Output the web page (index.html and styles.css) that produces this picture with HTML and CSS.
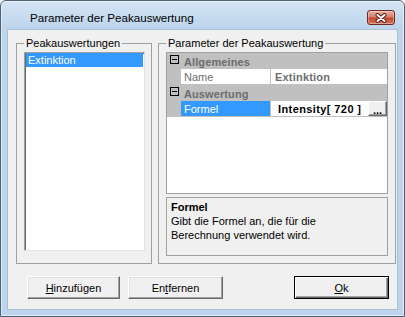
FILE: index.html
```html
<!doctype html>
<html lang="de">
<head>
  <meta charset="UTF-8" />
  <title>Parameter der Peakauswertung</title>
  <link rel="stylesheet" href="styles.css">
</head>
<body>
  <div class="window">
    <!-- Title bar -->
    <div class="titlebar">
      <span class="title">Parameter der Peakauswertung</span>
      <button class="close" aria-label="Schließen">
        <svg width="12" height="10" viewBox="0 0 12 10">
          <path d="M2.5 2 L9.5 8 M9.5 2 L2.5 8" stroke="#5b2118" stroke-width="4" stroke-linecap="round" fill="none"/>
          <path d="M2.5 2 L9.5 8 M9.5 2 L2.5 8" stroke="#fff" stroke-width="2" stroke-linecap="round" fill="none"/>
        </svg>
      </button>
    </div>

    <!-- Client area -->
    <div class="client">
      <div class="groups">
        <fieldset class="group group-list">
          <legend>Peakauswertungen</legend>
          <ul class="listbox">
            <li class="list-item selected">Extinktion</li>
          </ul>
        </fieldset>

        <fieldset class="group group-params">
          <legend>Parameter der Peakauswertung</legend>
          <div class="propgrid">
            <div class="category"><span class="toggle"></span><span class="category-label">Allgemeines</span></div>
            <div class="prop">
              <span class="prop-margin"></span>
              <span class="prop-name">Name</span>
              <span class="prop-value readonly">Extinktion</span>
            </div>
            <div class="category"><span class="toggle"></span><span class="category-label">Auswertung</span></div>
            <div class="prop">
              <span class="prop-margin"></span>
              <span class="prop-name selected">Formel</span>
              <span class="prop-value">
                <span class="value-text">Intensity[ 720 ]</span>
                <button class="ellipsis">...</button>
              </span>
            </div>
          </div>
          <div class="help">
            <p class="help-title">Formel</p>
            <p class="help-text">Gibt die Formel an, die für die<br>Berechnung verwendet wird.</p>
          </div>
        </fieldset>
      </div>

      <div class="buttons">
        <button class="btn btn-add"><u>H</u>inzufügen</button>
        <button class="btn btn-remove">En<u>t</u>fernen</button>
        <button class="btn btn-ok"><u>O</u>k</button>
      </div>
    </div>
  </div>
</body>
</html>
```

FILE: styles.css
```css
/* ------------------ Reset & Globals ------------------ */
* {
  margin: 0;
  padding: 0;
  box-sizing: border-box;
}
body {
  font-family: 'Liberation Sans', Arial, sans-serif;
  font-size: 11px;
  color: #000;
  background: #fff;
}
button {
  font: inherit;
  color: inherit;
}

/* ------------------ Window frame ------------------ */
.window {
  width: 405px;
  height: 317px;
  border: 1px solid #4f6074;
  border-radius: 6px 6px 0 0;
  background: linear-gradient(#d4e4f5, #bcd4ec 28px);
  box-shadow: inset 0 0 0 1px rgba(255, 255, 255, 0.5);
  display: flex;
  flex-direction: column;
}
.titlebar {
  height: 29px;
  display: flex;
  align-items: flex-start;
  padding: 9px 9px 0 29px;
}
.title {
  flex: 1;
  font-size: 11.6px;
  line-height: 15px;
  color: #000;
}
.close {
  width: 28px;
  height: 15px;
  border: 1px solid #6e2a20;
  border-radius: 3px;
  background: linear-gradient(#eab0a4, #d77d6b 45%, #c24630 55%, #d8745d);
  box-shadow: inset 0 0 0 1px rgba(255, 255, 255, 0.35);
  display: flex;
  align-items: center;
  justify-content: center;
}

/* ------------------ Client area ------------------ */
.client {
  margin: 0 7px 7px;
  height: 279px;
  background: #f0f0f0;
  box-shadow: 0 0 0 1px #a9bfd6;
  padding: 6px 0 0 8px;
  display: flex;
  flex-direction: column;
}
.groups {
  display: flex;
  gap: 6px;
  height: 228px;
}
.group {
  border: 1px solid #a0a0a0;
  display: flex;
  flex-direction: column;
  min-width: 0;
}
.group legend {
  padding: 0 2px;
  line-height: 15px;
}
.group-list {
  width: 136px;
  padding: 1px 6px 12px 7px;
}
.group-params {
  width: 238px;
  padding: 1px 7px 7px 7px;
}

/* ------------------ List box ------------------ */
.listbox {
  flex: 1;
  list-style: none;
  background: #fff;
  border-style: solid;
  border-width: 1px;
  border-color: #a0a0a0 #e3e3e3 #e3e3e3 #a0a0a0;
  box-shadow: inset 1px 1px 0 #696969;
  padding: 0 1px 0 1px;
}
.list-item {
  height: 14px;
  line-height: 14px;
  padding-left: 2px;
}
.list-item.selected {
  background: #3399ff;
  color: #fff;
}

/* ------------------ Property grid ------------------ */
.propgrid {
  flex: 1;
  border: 1px solid #a0a0a0;
  background: #fff;
}
.category {
  height: 16px;
  background: #c0c0c0;
  display: flex;
  align-items: flex-start;
  color: #6d6d6d;
  font-weight: bold;
}
.toggle {
  width: 9px;
  height: 9px;
  margin: 2px 5px 0 3px;
  border: 1px solid #000;
  background: linear-gradient(#000, #000) center / 5px 1px no-repeat;
}
.category-label {
  line-height: 18px;
  height: 16px;
  letter-spacing: 0.1px;
}
.prop {
  height: 16px;
  display: flex;
  border-bottom: 1px solid #c0c0c0;
}
.prop-margin {
  width: 14px;
  background: #c0c0c0;
}
.prop-name {
  width: 90px;
  padding-left: 3px;
  line-height: 17px;
  color: #6d6d6d;
  border-right: 1px solid #c0c0c0;
}
.prop-name.selected {
  background: #3399ff;
  color: #fff;
}
.prop-value {
  flex: 1;
  display: flex;
  align-items: flex-start;
  padding-left: 4px;
  line-height: 17px;
  font-weight: bold;
  letter-spacing: 0.2px;
}
.prop-value.readonly {
  color: #6d6d6d;
}
.value-text {
  flex: 1;
  padding-left: 3px;
  letter-spacing: 0.4px;
}
.ellipsis {
  width: 19px;
  height: 15px;
  background: #f0f0f0;
  border: 1px solid;
  border-color: #fff #696969 #696969 #fff;
  box-shadow: inset -1px -1px 0 #a0a0a0;
  font-weight: bold;
  line-height: 16px;
  letter-spacing: 0;
}

/* ------------------ Help panel ------------------ */
.help {
  height: 59px;
  margin-top: 3px;
  border: 1px solid #a0a0a0;
  background: #f0f0f0;
  padding: 2px 4px;
  line-height: 14px;
}
.help-title {
  font-weight: bold;
}

/* ------------------ Dialog buttons ------------------ */
.buttons {
  display: flex;
  margin-top: 12px;
  padding-right: 8px;
}
.btn {
  height: 23px;
  background: #f0f0f0;
  border: 1px solid;
  border-color: #fff #696969 #696969 #fff;
  box-shadow: inset -1px -1px 0 #a0a0a0, inset 1px 1px 0 #e3e3e3;
  line-height: 20px;
}
.btn-add {
  width: 93px;
  margin-left: 11px;
}
.btn-remove {
  width: 95px;
  margin-left: 8px;
}
.btn-ok {
  width: 95px;
  margin-left: auto;
  border-color: #000;
  box-shadow: inset 1px 1px 0 #fff, inset -1px -1px 0 #696969, inset -2px -2px 0 #a0a0a0;
}
```
